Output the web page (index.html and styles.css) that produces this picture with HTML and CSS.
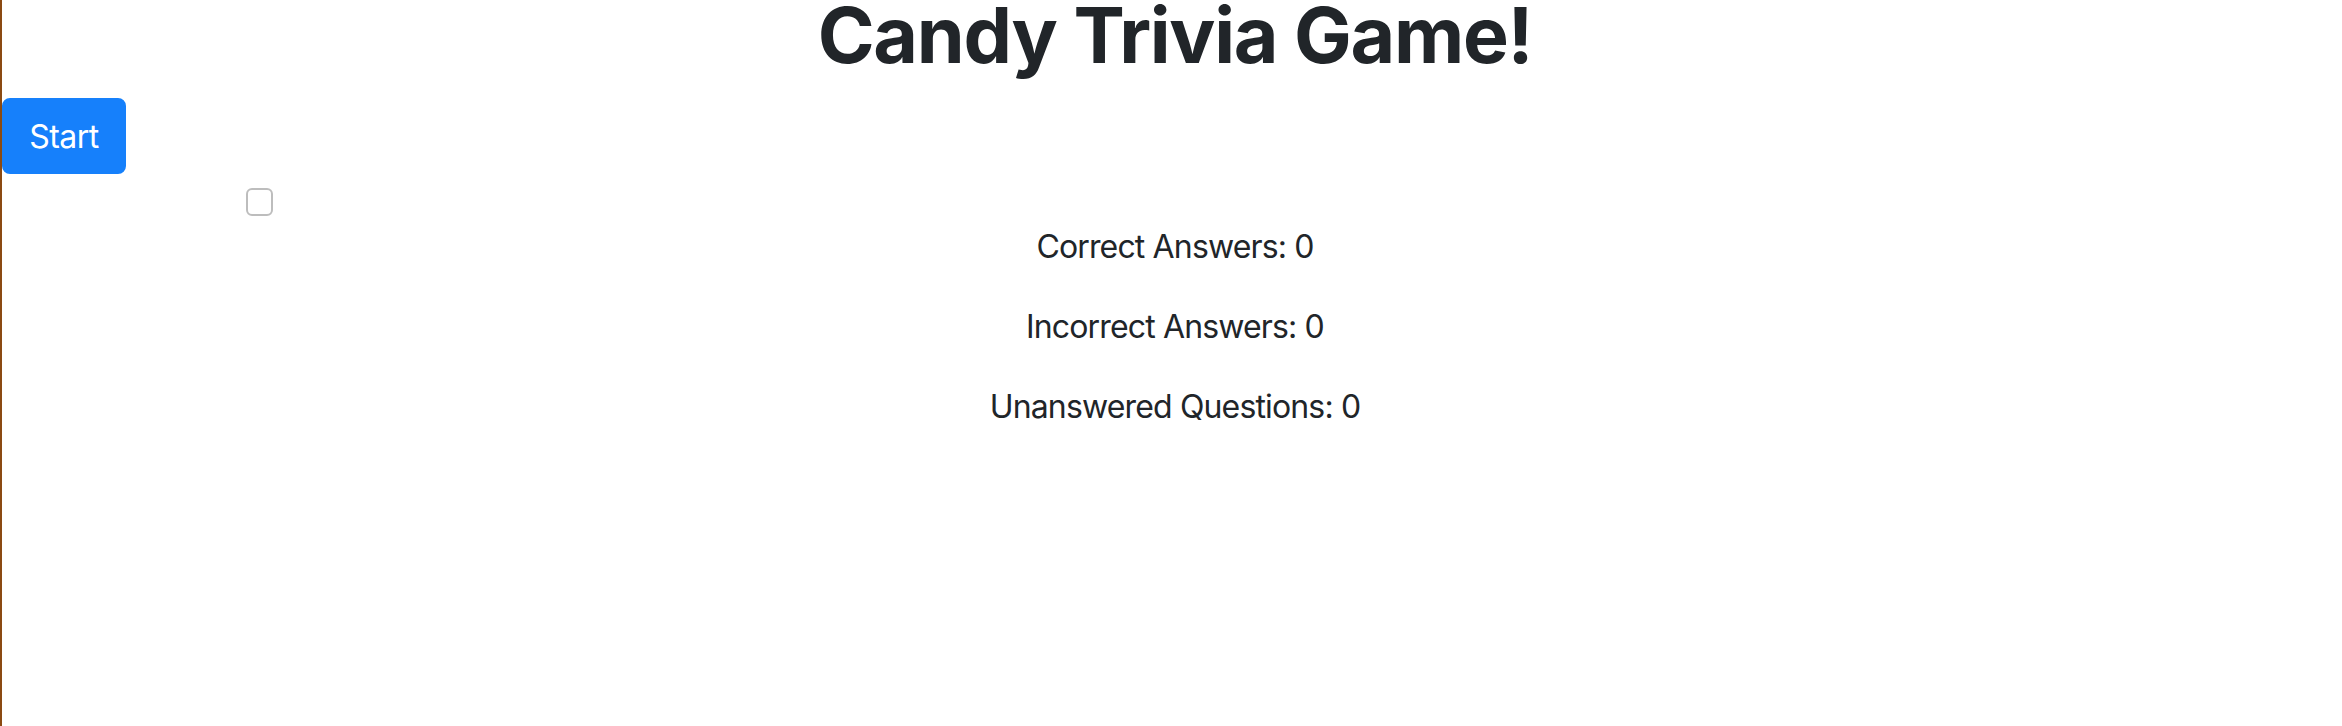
FILE: index.html
```html
<!DOCTYPE html>
<html lang="en">
<head>
<meta charset="utf-8">
<title>Candy Trivia Game!</title>
<link rel="stylesheet" href="styles.css">
</head>
<body>
<div class="page">
  <h1 class="title">Candy Trivia Game!</h1>
  <button class="btn-start" type="button">Start</button>
  <div class="question-row">
    <input class="check" type="checkbox">
  </div>
  <div class="results">
    <p class="stat">Correct Answers: 0</p>
    <p class="stat">Incorrect Answers: 0</p>
    <p class="stat">Unanswered Questions: 0</p>
  </div>
</div>
</body>
</html>
```

FILE: styles.css
```css
html, body {
  margin: 0;
  padding: 0;
  background: #ffffff;
}
body {
  font-family: Inter, "Noto Sans", "Liberation Sans", sans-serif;
  color: #212529;
}
.page {
  min-height: 726px;
  border-left: 2px solid #8b4a12;
  display: flex;
  flex-direction: column;
  box-sizing: border-box;
}
.title {
  margin: 0 0 28px 0;
  text-align: center;
  font-size: 77px;
  font-weight: 700;
  line-height: 70px;
  letter-spacing: -1.3px;
  padding-left: 6px;
}
.btn-start {
  align-self: flex-start;
  width: 124px;
  height: 76px;
  margin: 0;
  border: 2px solid #1680fb;
  border-radius: 8px;
  background: #1680fb;
  color: #ffffff;
  font-family: Inter, "Noto Sans", "Liberation Sans", sans-serif;
  font-size: 32px;
  font-weight: 400;
  letter-spacing: -0.5px;
  padding: 0;
}
.question-row {
  display: flex;
  padding: 14px 0 0 244px;
}
.check {
  appearance: none;
  -webkit-appearance: none;
  width: 27px;
  height: 28px;
  margin: 0;
  border: 2px solid #bdbdbd;
  border-radius: 6px;
  background: #fff;
}
.results {
  padding-top: 7px;
  padding-left: 6px;
  text-align: center;
}
.stat {
  margin: 0 0 32px 0;
  font-size: 32px;
  line-height: 48px;
  letter-spacing: -0.85px;
}
```
